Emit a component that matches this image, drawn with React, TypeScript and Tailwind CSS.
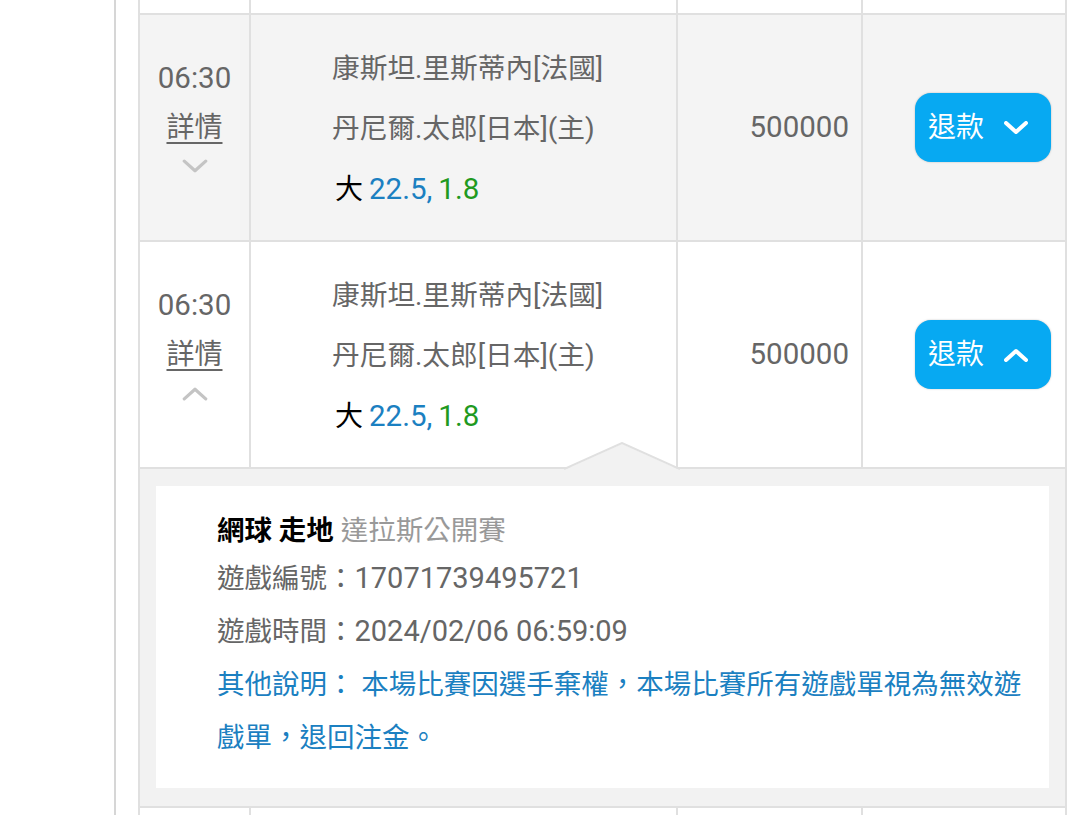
import React from "react";

const font = "font-['Roboto','Noto_Sans_CJK_TC',sans-serif]";

const Chevron = ({ up, className }: { up?: boolean; className?: string }) => (
    <svg viewBox="0 0 24 14" className={className} fill="none">
        <polyline
            points={up ? "2,12 12,3 22,12" : "2,2 12,11 22,2"}
            stroke="currentColor"
            strokeWidth="3"
            strokeLinecap="round"
            strokeLinejoin="round"
        />
    </svg>
);

const BetRow = ({ open, shaded }: { open?: boolean; shaded?: boolean }) => (
    <div
        className={`flex h-[227px] border-b-2 border-[#e0e0e0] ${
            shaded ? "bg-[#f4f4f4]" : "bg-white"
        }`}
    >
        <div className="w-[111px] border-r-2 border-[#e0e0e0] flex flex-col items-center justify-center pb-[28px] text-[#666] text-[28px]">
            <div className="leading-[50px] text-[29.5px]">06:30</div>
            <div className="leading-[50px] underline underline-offset-[5px] decoration-[2px]">
                詳情
            </div>
            <Chevron up={open} className="w-[26px] h-[15px] text-[#c4c4c4] mt-[6px]" />
        </div>
        <div className="w-[427px] border-r-2 border-[#e0e0e0] flex flex-col justify-center pl-[81px] pt-[4px] text-[27.7px] leading-[60px]">
            <div className="text-[#666]">康斯坦.里斯蒂內[法國]</div>
            <div className="text-[#666]">丹尼爾.太郎[日本](主)</div>
            <div className="pl-[3px] text-[29.5px]">
                <span className="text-black text-[28px]">大</span>
                <span className="text-[#1b80c1] ml-[6px]">22.5,</span>
                <span className="text-[#1f9a1f] ml-[6px]">1.8</span>
            </div>
        </div>
        <div className="w-[185px] border-r-2 border-[#e0e0e0] flex items-center justify-end pr-[12px] text-[#666] text-[29.5px]">
            500000
        </div>
        <div className="flex-1 flex items-center justify-end pr-[14px]">
            <button className="w-[136px] h-[69px] rounded-[16px] bg-[#07a9f2] shadow-[0_0_2px_rgba(0,0,0,0.25)] flex items-center pl-[13px] text-white text-[28px]">
                <span>退款</span>
                <Chevron up={open} className="w-[24px] h-[14px] ml-[20px] [&>polyline]:stroke-[4]" />
            </button>
        </div>
    </div>
);

export default function App() {
    return (
        <div className={`w-[1080px] h-[815px] overflow-hidden bg-white flex ${font}`}>
            <div className="w-[114px] shrink-0" />
            <div className="w-[2px] bg-[#d6d6d6] shrink-0" />
            <div className="w-[22px] shrink-0" />
            <div className="w-[929px] shrink-0 border-x-2 border-[#e0e0e0] mt-[-60px]">
                <div className="flex h-[75px] border-b-2 border-[#e0e0e0] bg-white">
                    <div className="w-[111px] border-r-2 border-[#e0e0e0]" />
                    <div className="w-[427px] border-r-2 border-[#e0e0e0]" />
                    <div className="w-[185px] border-r-2 border-[#e0e0e0]" />
                </div>
                <BetRow shaded />
                <div className="relative">
                    <BetRow open />
                    <svg
                        className="absolute left-[424px] bottom-[-2px]"
                        width="116"
                        height="29"
                        viewBox="0 0 116 29"
                    >
                        <polygon points="0,28 58,2 116,28" fill="#f2f2f2" />
                        <polyline
                            points="0,27 58,1 116,27"
                            fill="none"
                            stroke="#e0e0e0"
                            strokeWidth="2"
                        />
                    </svg>
                </div>
                <div className="bg-[#f2f2f2] px-[16px] pt-[17px] pb-[18px] border-b-2 border-[#e0e0e0]">
                    <div className="bg-white pl-[61px] pr-[20px] pt-[24px] pb-[24px] text-[27.5px] leading-[53px] text-[#666]">
                        <div className="leading-[42px]">
                            <span className="font-bold text-black">網球 走地</span>{" "}
                            <span className="text-[#999]">達拉斯公開賽</span>
                        </div>
                        <div>
                            遊戲編號：<span className="text-[29px]">17071739495721</span>
                        </div>
                        <div>
                            遊戲時間：<span className="text-[29px]">2024/02/06 06:59:09</span>
                        </div>
                        <div className="text-[#1b80c1]">
                            其他說明： 本場比賽因選手棄權，本場比賽所有遊戲單視為無效遊戲單，退回注金。
                        </div>
                    </div>
                </div>
                <div className="flex h-[80px] bg-white">
                    <div className="w-[111px] border-r-2 border-[#e0e0e0]" />
                    <div className="w-[427px] border-r-2 border-[#e0e0e0]" />
                    <div className="w-[185px] border-r-2 border-[#e0e0e0]" />
                </div>
            </div>
        </div>
    );
}
